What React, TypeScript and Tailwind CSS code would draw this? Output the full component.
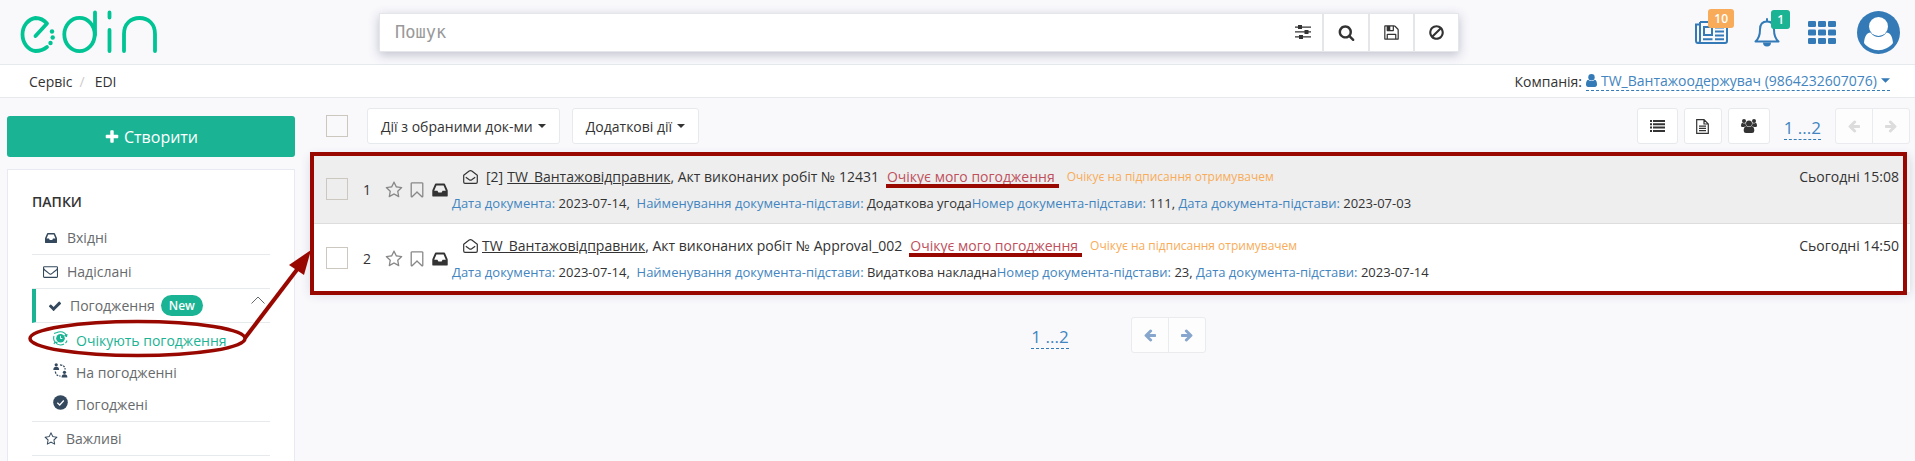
import React from "react";

type IconProps = { className?: string };

function Glyph({ d, className }: { d: string; className?: string }) {
  return (
    <svg viewBox="0 0 1792 1792" fill="currentColor" className={className} aria-hidden="true">
      <path d={d} />
    </svg>
  );
}

const INBOX =
  "M1151 960h316q-1-3-2.5-8t-2.5-8l-212-496h-708l-212 496q-1 2-2.5 8t-2.5 8h316l95 192h320zm513 30v482q0 26-19 45t-45 19h-1408q-26 0-45-19t-19-45v-482q0-62 25-123l238-552q10-25 36.5-42t52.5-17h832q26 0 52.5 17t36.5 42l238 552q25 61 25 123z";
const PLUS =
  "M1600 736v192q0 40-28 68t-68 28h-416v416q0 40-28 68t-68 28h-192q-40 0-68-28t-28-68v-416h-416q-40 0-68-28t-28-68v-192q0-40 28-68t68-28h416v-416q0-40 28-68t68-28h192q40 0 68 28t28 68v416h416q40 0 68 28t28 68z";
const CHECK =
  "M1671 566q0 40-28 68l-724 724-136 136q-28 28-68 28t-68-28l-136-136-362-362q-28-28-28-68t28-68l136-136q28-28 68-28t68 28l294 295 656-657q28-28 68-28t68 28l136 136q28 28 28 68z";
const STAR =
  "M1201 1004l306-297-422-62-189-382-189 382-422 62 306 297-73 421 378-199 377 199zm527-357q0 22-26 48l-363 354 86 500q1 7 1 20 0 50-41 50-19 0-40-12l-449-236-449 236q-22 12-40 12-21 0-31.5-14.5t-10.5-35.5q0-6 2-20l86-500-364-354q-25-27-25-48 0-37 56-46l502-73 225-455q19-41 49-41t49 41l225 455 502 73q56 9 56 46z";
const BOOKMARK =
  "M1408 256h-1024v1242l423-406 89-85 89 85 423 406v-1242zm12-128q23 0 44 9 33 13 52.5 41t19.5 62v1289q0 34-19.5 62t-52.5 41q-19 8-44 8-48 0-83-32l-441-424-441 424q-36 33-83 33-23 0-44-9-33-13-52.5-41t-19.5-62v-1289q0-34 19.5-62t52.5-41q21-9 44-9h1048z";
const SEARCH =
  "M1216 832q0-185-131.5-316.5t-316.5-131.5-316.5 131.5-131.5 316.5 131.5 316.5 316.5 131.5 316.5-131.5 131.5-316.5zm512 832q0 52-38 90t-90 38q-54 0-90-38l-343-342q-179 124-399 124-143 0-273.5-55.5t-225-150-150-225-55.5-273.5 55.5-273.5 150-225 225-150 273.5-55.5 273.5 55.5 225 150 150 225 55.5 273.5q0 220-124 399l343 343q37 37 37 90z";
const BAN =
  "M1440 893q0-161-87-295l-754 753q137 89 297 89 111 0 211.5-43.5t173.5-116.5 116-174.5 43-212.5zm-999 299l755-754q-135-91-300-91-148 0-273 73t-198 199-73 274q0 162 89 299zm1223-299q0 157-61 300t-163.5 246-245 164-298.5 61-298.5-61-245-164-163.5-246-61-300 61-299.5 163.5-245.5 245-164 298.5-61 298.5 61 245 164 163.5 245.5 61 299.5z";
const ARROW_LEFT =
  "M1664 896v128q0 53-32.5 90.5t-84.5 37.5h-704l293 294q38 36 38 90t-38 90l-75 76q-37 37-90 37-52 0-91-37l-651-652q-37-37-37-90 0-52 37-91l651-650q38-38 91-38 52 0 90 38l75 74q38 38 38 91t-38 91l-293 293h704q52 0 84.5 37.5t32.5 90.5z";
const FLOPPY =
  "M512 1536h768v-384h-768v384zm896 0h128v-896q0-14-10-38.5t-20-34.5l-281-281q-10-10-34-20t-39-10v416q0 40-28 68t-68 28h-576q-40 0-68-28t-28-68v-416h-128v1280h128v-416q0-40 28-68t68-28h832q40 0 68 28t28 68v416zm-384-928v-320q0-13-9.5-22.5t-22.5-9.5h-192q-13 0-22.5 9.5t-9.5 22.5v320q0 13 9.5 22.5t22.5 9.5h192q13 0 22.5-9.5t9.5-22.5zm640 32v928q0 40-28 68t-68 28h-1344q-40 0-68-28t-28-68v-1344q0-40 28-68t68-28h928q40 0 88 20t76 48l280 280q28 28 48 76t20 88z";
const ENVELOPE =
  "M1664 1504v-768q-32 36-69 66-268 206-426 338-51 43-83 67t-86.5 48.5-102.5 24.5h-2q-48 0-102.5-24.5t-86.5-48.5-83-67q-158-132-426-338-37-30-69-66v768q0 13 9.5 22.5t22.5 9.5h1472q13 0 22.5-9.5t9.5-22.5zm0-1051v-24.5l-.5-13-3-12.5-5.5-9-9-7.5-14-2.5h-1472q-13 0-22.5 9.5t-9.5 22.5q0 168 147 284 193 152 401 317 6 5 35 29.5t46 37.5 44.5 31.5 50.5 27.5 43 9h2q20 0 43-9t50.5-27.5 44.5-31.5 46-37.5 35-29.5q208-165 401-317 54-43 100.5-115.5t46.5-131.5zm128-37v1088q0 66-47 113t-113 47h-1472q-66 0-113-47t-47-113v-1088q0-66 47-113t113-47h1472q66 0 113 47t47 113z";

function Logo() {
  return (
    <svg viewBox="0 0 138 43" className="h-[43px] w-[138px]" fill="none" stroke="#00c494" strokeWidth="3.8" strokeLinecap="round" role="img" aria-label="edin">
      <path d="M16.5 26 L28 13.5 C24.5 9.5 20.5 8 16.5 8 A14.6 16.6 0 0 0 16.5 41 C20.5 41 25 39.5 28 37" strokeLinejoin="round" />
      <ellipse cx="60.5" cy="24.5" rx="15.2" ry="16.6" />
      <path d="M76 2.5 V25" />
      <path d="M90.5 2.5 V7.5 M90.5 20 V41" />
      <path d="M105 41 V24 C105 14 111.500 8 120.500 8 C129.500 8 136 14 136 24 V41" />
      <g fill="#00c494" stroke="none">
        <circle cx="33" cy="21.500" r="2.200" />
        <circle cx="33.700" cy="27.500" r="2.200" />
        <circle cx="31.500" cy="33" r="2.200" />
      </g>
    </svg>
  );
}

function SlidersIcon({ className }: IconProps) {
  return (
    <svg viewBox="0 0 16 14" fill="currentColor" className={className} aria-hidden="true">
      <path d="M0 1.500h16v1.200H0zM3 0h4v4H3zM0 6.200h16v1.200H0zM9.500 5h4v4h-4zM0 11.200h16v1.200H0zM4 10h4v4H4z" />
    </svg>
  );
}

function NewsIcon({ className }: IconProps) {
  return (
    <svg viewBox="0 0 33 23" fill="none" stroke="currentColor" strokeWidth="2" className={className} aria-hidden="true">
      <path d="M5 1 H32 V20 Q32 22 30 22 H3 Q1 22 1 19.500 V3.500 H5 M5 1 V19.500 Q5 22 3 22" />
      <path d="M9 6 H17 V14 H9 Z M20 6.500 H29 M20 10.500 H29 M20 14.500 H29 M8 18.200 H17.500 M20 18.200 H29" />
    </svg>
  );
}

function BellIcon({ className }: IconProps) {
  return (
    <svg viewBox="0 0 26 29" className={className} fill="none" stroke="currentColor" strokeWidth="2" strokeLinejoin="round" aria-hidden="true">
      <path d="M1.500 23.500 C5 20.500 6 17 6 11.500 C6 6.500 8.500 3.500 13 3.500 C17.500 3.500 20 6.500 20 11.500 C20 17 21 20.500 24.500 23.500 Z" />
      <path d="M13 3 V1" strokeLinecap="round" />
      <path d="M9 24.500 H17 A4 4 0 0 1 9 24.500 Z" fill="currentColor" stroke="none" />
    </svg>
  );
}

function GridIcon({ className }: IconProps) {
  return (
    <svg viewBox="0 0 28 23" className={className} fill="currentColor" aria-hidden="true">
      {[0, 8.5, 17].map((y) => [0, 10, 20].map((x) => <rect key={`${x}-${y}`} x={x} y={y} width="8" height="6" rx="1.3" />))}
    </svg>
  );
}

function AvatarIcon({ className }: IconProps) {
  return (
    <svg viewBox="0 0 43 43" className={className} aria-hidden="true">
      <circle cx="21.500" cy="21.500" r="21.500" fill="#337ab7" />
      <path d="M7 32 C7.500 25.500 10 21.500 13.500 21.500 C18 27.500 25 27.500 29.500 21.500 C33 21.500 35.500 25.500 36 32 C29 41.500 14 41.500 7 32 Z" fill="#fff" />
      <circle cx="21.500" cy="15.500" r="9.500" fill="#fff" />
    </svg>
  );
}

function UserIcon({ className }: IconProps) {
  return (
    <svg viewBox="0 0 11 13" className={className} fill="currentColor" aria-hidden="true">
      <circle cx="5.500" cy="3.200" r="3.200" />
      <path d="M2.300 5.800 C3.800 7.400 7.200 7.400 8.700 5.800 C10.500 6.200 11 8.500 11 10.500 C11 12 10.200 13 8.800 13 H2.200 C0.800 13 0 12 0 10.500 C0 8.500 0.500 6.200 2.300 5.800 Z" />
    </svg>
  );
}

function ListIcon({ className }: IconProps) {
  return (
    <svg viewBox="0 0 15 12" className={className} fill="currentColor" aria-hidden="true">
      <path d="M0 0h2v2H0zM3 0h12v2H3zM0 3.300h2v2H0zM3 3.300h12v2H3zM0 6.600h2v2H0zM3 6.600h12v2H3zM0 9.900h2v2H0zM3 9.900h12v2H3z" />
    </svg>
  );
}

function FileIcon({ className }: IconProps) {
  return (
    <svg viewBox="0 0 13 15" className={className} fill="none" stroke="currentColor" strokeWidth="1.200" aria-hidden="true">
      <path d="M0.700 0.700 H8 L12.300 5 V14.300 H0.700 Z M8 0.700 V5 H12.300 M3 7.200 H10 M3 9.400 H10 M3 11.600 H10" />
    </svg>
  );
}

function UsersIcon({ className }: IconProps) {
  return (
    <svg viewBox="0 0 16 14" className={className} fill="currentColor" aria-hidden="true">
      <circle cx="3" cy="2" r="2" />
      <circle cx="13" cy="2" r="2" />
      <circle cx="8" cy="4.500" r="3" />
      <path d="M1.200 3.800 Q3 5 4.500 4 Q4.500 6 5.500 7 Q4 7 3.200 8 H1.200 Q0 8 0 6.500 Q0 4.500 1.200 3.800 Z M14.800 3.800 Q13 5 11.500 4 Q11.500 6 10.500 7 Q12 7 12.800 8 H14.800 Q16 8 16 6.500 Q16 4.500 14.800 3.800 Z" />
      <path d="M5.200 7 Q8 9 10.800 7 C12.700 7.500 13.300 9.500 13.300 11.700 Q13.300 14 11 14 H5 Q2.700 14 2.700 11.700 C2.700 9.500 3.300 7.500 5.200 7 Z" />
    </svg>
  );
}

function OpenEnvelopeIcon({ className }: IconProps) {
  return (
    <svg viewBox="0 0 15 14" className={className} fill="none" stroke="currentColor" strokeWidth="1.200" strokeLinejoin="round" aria-hidden="true">
      <path d="M0.700 5.200 L6.200 1.100 Q7.500 0.200 8.800 1.100 L14.300 5.200 V12 Q14.300 13.300 13 13.300 H2 Q0.700 13.300 0.700 12 Z" />
      <path d="M2.800 7.200 L6.300 9.800 Q7.500 10.600 8.700 9.800 L12.200 7.200" />
    </svg>
  );
}

function AwaitIcon({ className }: IconProps) {
  return (
    <svg viewBox="0 0 15 15" className={className} fill="none" stroke="currentColor" strokeWidth="1.100" aria-hidden="true">
      <circle cx="7.500" cy="7.300" r="4.300" fill="currentColor" stroke="none" />
      <path d="M7.500 4.800 V7.500 H9.300" stroke="#fff" strokeWidth="0.900" />
      <path d="M4 1.600 A6.600 6.600 0 0 1 13.500 5 M14 3 L13.600 5.500 L11.500 4.500 M1 5 A6.600 6.600 0 0 0 1.600 10.500 M11 13 A6.600 6.600 0 0 1 2.500 11.500 M1 13 L2 10.800 L4.500 11.500 M1 2.500 L4 1.500 M14 9.500 A6.600 6.600 0 0 1 12.500 12.200" />
    </svg>
  );
}

function ExchangeIcon({ className }: IconProps) {
  return (
    <svg viewBox="0 0 14 14" className={className} fill="currentColor" aria-hidden="true">
      <circle cx="3" cy="1.700" r="1.500" />
      <path d="M0.300 6.500 Q0.300 3.600 3 3.600 Q5.700 3.600 5.700 6.500 Z" />
      <circle cx="10.700" cy="8.700" r="1.500" />
      <path d="M8 13.500 Q8 10.600 10.700 10.600 Q13.400 10.600 13.400 13.500 Z" />
      <path d="M6.500 1.800 Q11 1.800 11.300 6 M2.200 8 Q2.500 12 7 12.200" fill="none" stroke="currentColor" strokeWidth="1.200" strokeDasharray="2 1" />
    </svg>
  );
}

function RoundCheckIcon({ className }: IconProps) {
  return (
    <svg viewBox="0 0 15 15" className={className} aria-hidden="true">
      <circle cx="7.500" cy="7.500" r="7.300" fill="currentColor" />
      <path d="M4.300 7.800 L6.700 10 L10.800 5.500" fill="none" stroke="#fff" strokeWidth="1.300" />
    </svg>
  );
}

function Caret({ className }: IconProps) {
  return (
    <svg viewBox="0 0 8 4" className={className} fill="currentColor" aria-hidden="true">
      <path d="M0 0h8L4 4z" />
    </svg>
  );
}

const box = "block size-[22px] shrink-0 appearance-none border border-[#ccc8c0] bg-transparent";
const toolButton = "flex h-[36px] items-center justify-center rounded-[3px] border border-[#e7eaec] bg-white text-[#333]";

function PageLink() {
  return (
    <a href="#pages" className="border-b border-dashed border-[#337ab7] text-[17px] leading-6 text-[#4285c0]">
      1 ...2
    </a>
  );
}

function Pager({ muted }: { muted: boolean }) {
  const tone = muted ? "text-[#dcdcdc]" : "text-[#87a6cd]";
  return (
    <div className={`flex h-[36px] rounded-[3px] border border-[#e9ebee] bg-[#fdfdfd] ${tone}`}>
      <button aria-label="Попередня" className="flex w-[37px] items-center justify-center border-r border-[#e9ebee]">
        <Glyph d={ARROW_LEFT} className="size-[14px]" />
      </button>
      <button aria-label="Наступна" className="flex w-[36px] items-center justify-center">
        <Glyph d={ARROW_LEFT} className="size-[14px] -scale-x-100" />
      </button>
    </div>
  );
}

type Doc = {
  id: number;
  prefix?: string;
  number: string;
  date: string;
  base: string;
  baseNumber: string;
  baseDate: string;
  time: string;
};

const docs: Doc[] = [
  { id: 1, prefix: "[2]", number: "12431", date: "2023-07-14", base: "Додаткова угода", baseNumber: "111", baseDate: "2023-07-03", time: "Сьогодні 15:08" },
  { id: 2, number: "Approval_002", date: "2023-07-14", base: "Видаткова накладна", baseNumber: "23", baseDate: "2023-07-14", time: "Сьогодні 14:50" },
];

function Label({ children }: { children: React.ReactNode }) {
  return <span className="text-[#4285c0]">{children}</span>;
}

function DocRow({ doc }: { doc: Doc }) {
  return (
    <tr className="h-[68px] border-b border-[#ddd] bg-white align-top odd:bg-[#eee] last:h-[69px] last:border-0">
      <td className="w-[52px] pt-[23px] pl-[15px]">
        <input type="checkbox" aria-label={`Обрати документ ${doc.id}`} className={box} />
      </td>
      <td className="w-[22px] pt-[25px] text-[14px] leading-5">{doc.id}</td>
      <td className="w-[67px] pt-[26px]">
        <div className="flex items-center gap-[5px] text-[#888]">
          <button aria-label="Важливий"><Glyph d={STAR} className="block size-[18px]" /></button>
          <button aria-label="Закладка"><Glyph d={BOOKMARK} className="block size-[18px]" /></button>
          <Glyph d={INBOX} className="block size-[18px] text-[#333]" />
        </div>
      </td>
      <td className="pt-[12px]">
        <div className="flex items-center pl-[11px] text-[14px] leading-5">
          <OpenEnvelopeIcon className="mr-1 h-[14px] w-[15px]" />
          {doc.prefix && <span className="mx-1">{doc.prefix}</span>}
          <a href="#document" className="underline">TW_Вантажовідправник</a>
          <span className="mr-2">, Акт виконаних робіт № {doc.number}</span>
          <span className="relative text-[#c0505c] after:absolute after:top-[17px] after:-right-1 after:-left-px after:h-1 after:bg-[#990800]">
            Очікує мого погодження
          </span>
          <span className="ml-3 text-[12px] text-[#f8ac59]">Очікує на підписання отримувачем</span>
        </div>
        <div className="mt-[6px] text-[13px] leading-5">
          <Label>Дата документа:</Label> {doc.date},&nbsp; <Label>Найменування документа-підстави:</Label> {doc.base}
          <Label>Номер документа-підстави:</Label> {doc.baseNumber}, <Label>Дата документа-підстави:</Label> {doc.baseDate}
        </div>
      </td>
      <td className="pt-[12px] pr-[11px] text-right text-[14px] leading-5 whitespace-nowrap">{doc.time}</td>
    </tr>
  );
}

export default function App() {
  const item = "flex h-[34px] items-center border-b border-[#e7eaec]";
  const sub = "flex h-8 items-center pl-[21px]";
  return (
    <div className="flex min-h-screen flex-col bg-[#f9f9fc] font-['Open_Sans',sans-serif] text-[14px] text-[#333]">
      <header className="grid h-[65px] grid-cols-[379px_minmax(0,1fr)_456px] items-center border-b border-[#e7eaec]">
        <a href="#home" className="ml-[19px] pb-px"><Logo /></a>
        <form className="flex h-[39px] border border-[#e5e6e9] bg-white shadow-[0_3px_10px_rgba(60,65,100,0.3)]">
          <input
            type="text"
            aria-label="Пошук"
            placeholder="Пошук"
            className="min-w-0 flex-1 bg-transparent px-[15px] pt-[2px] font-['DejaVu_Sans_Mono',monospace] text-[17px] outline-none placeholder:text-[#999]"
          />
          <button type="button" aria-label="Фільтри" className="flex w-[39px] items-center justify-center"><SlidersIcon className="h-[14px] w-4" /></button>
          <button type="button" aria-label="Шукати" className="flex w-[46px] items-center justify-center border-l-2 border-[#e5e6e9]"><Glyph d={SEARCH} className="size-[17px]" /></button>
          <button type="button" aria-label="Зберегти" className="flex w-[45px] items-center justify-center border-l-2 border-[#e5e6e9]"><Glyph d={FLOPPY} className="size-[17px]" /></button>
          <button type="button" aria-label="Очистити" className="flex w-[45px] items-center justify-center border-l-2 border-[#e5e6e9]"><Glyph d={BAN} className="size-[17px]" /></button>
        </form>
        <div className="flex items-center justify-end pr-[15px] text-[#337ab7]">
          <button aria-label="Новини" className="relative mr-[26px]">
            <NewsIcon className="block h-[23px] w-[33px]" />
            <span className="absolute -top-3 -right-[6px] rounded-[3px] bg-[#f8ac59] px-[6px] text-[12px] leading-[19px] font-semibold text-white">10</span>
          </button>
          <button aria-label="Сповіщення" className="relative mr-[28px]">
            <BellIcon className="block h-[29px] w-[26px]" />
            <span className="absolute -top-2 -right-[10px] rounded-[3px] bg-[#1ab394] px-[6px] text-[12px] leading-[19px] font-semibold text-white">1</span>
          </button>
          <button aria-label="Сервіси" className="mr-[21px]"><GridIcon className="block h-[23px] w-[28px]" /></button>
          <button aria-label="Профіль"><AvatarIcon className="block size-[43px]" /></button>
        </div>
      </header>

      <div className="flex h-[33px] items-center justify-between border-b border-[#e7eaec] bg-white pr-[25px] pl-[29px]">
        <nav className="flex">
          <a href="#service">Сервіс</a>
          <span className="mr-[10px] ml-[7px] text-[#ccc]">/</span>
          <a href="#edi">EDI</a>
        </nav>
        <div className="flex items-center">
          <span className="mr-1">Компанія:</span>
          <a href="#company" className="flex items-center gap-1 border-b border-dashed border-[#337ab7] leading-[19px] text-[#4285c0]">
            <UserIcon className="h-[13px] w-[11px] text-[#337ab7]" />
            TW_Вантажоодержувач (9864232607076)
            <Caret className="h-[5px] w-[9px] text-[#337ab7]" />
          </a>
        </div>
      </div>

      <div className="flex flex-1">
        <aside className="flex w-[295px] shrink-0 flex-col pt-[18px] pl-[7px]">
          <button className="flex h-[41px] items-center justify-center gap-1 rounded-[3px] bg-[#1ab394] text-[16px] text-white">
            <Glyph d={PLUS} className="size-4" />
            Створити
          </button>
          <div className="mt-3 flex-1 border border-[#e7eaf0] border-b-0 bg-white pr-6 pl-6 text-[#676a6c]">
            <h2 className="mt-[22px] mb-[9px] text-[14px] leading-5 font-semibold text-[#333]">ПАПКИ</h2>
            <a href="#inbox" className={`${item} pl-3`}>
              <Glyph d={INBOX} className="mr-[9px] size-[14px] text-[#34495e]" />
              Вхідні
            </a>
            <a href="#sent" className={`${item} pl-[11px]`}>
              <Glyph d={ENVELOPE} className="mr-[9px] size-[15px] text-[#34495e]" />
              Надіслані
            </a>
            <a href="#approval" className={`${item} border-l-4 border-l-[#1ab394] pl-3`}>
              <Glyph d={CHECK} className="mr-2 size-[14px] text-[#34495e]" />
              Погодження
              <span className="ml-[6px] rounded-full bg-[#1ab394] px-2 text-[12px] leading-[21px] font-semibold text-white">New</span>
              <svg viewBox="0 0 14 8" className="mr-[5px] mb-3 ml-auto h-2 w-[14px]" fill="none" stroke="#676a6c" aria-hidden="true">
                <path d="M0.500 7.500 L7 1 L13.500 7.500" />
              </svg>
            </a>
            <div className="relative border-b border-[#e7eaec] py-px">
              <a href="#awaiting" className={`${sub} text-[#1ab394]`}>
                <AwaitIcon className="mr-2 mb-1 size-[15px]" />
                Очікують погодження
              </a>
              <a href="#in-progress" className={`${sub}`}>
                <ExchangeIcon className="mr-2 mb-1 size-[15px] text-[#34495e]" />
                На погодженні
              </a>
              <a href="#approved" className={`${sub}`}>
                <RoundCheckIcon className="mr-2 mb-1 size-[15px] text-[#34495e]" />
                Погоджені
              </a>
              <svg viewBox="0 0 284 120" className="pointer-events-none absolute -top-[83px] -left-1 z-10 h-[120px] w-[284px]" fill="none" stroke="#990800" strokeWidth="3.500" aria-hidden="true">
                <ellipse cx="109.500" cy="98.500" rx="107.500" ry="17" />
                <path d="M217 98 L271 27" strokeWidth="4" />
                <path d="M283 10 L276 35 L261 25 Z" fill="#990800" stroke="none" />
              </svg>
            </div>
            <a href="#important" className={`${item} pl-3`}>
              <Glyph d={STAR} className="mr-2 size-[14px] text-[#34495e]" />
              Важливі
            </a>
          </div>
        </aside>

        <main className="min-w-0 flex-1 pt-[10px] pr-[5px] pl-4">
          <div className="flex items-center pl-[15px]">
            <input type="checkbox" aria-label="Обрати всі" className={box} />
            <button className={`${toolButton} ml-[19px] gap-[5px] px-[13px]`}>
              Дії з обраними док-ми
              <Caret className="h-1 w-2" />
            </button>
            <button className={`${toolButton} ml-3 gap-[5px] px-[13px]`}>
              Додаткові дії
              <Caret className="h-1 w-2" />
            </button>
            <div className="ml-auto flex items-center gap-[6px]">
              <button aria-label="Список" className={`${toolButton} w-[41px]`}><ListIcon className="h-3 w-[15px]" /></button>
              <button aria-label="Документ" className={`${toolButton} w-[38px]`}><FileIcon className="h-[15px] w-[13px]" /></button>
              <button aria-label="Групи" className={`${toolButton} w-[42px]`}><UsersIcon className="h-[14px] w-4" /></button>
            </div>
            <div className="mx-[14px] pt-[3px]"><PageLink /></div>
            <Pager muted />
          </div>

          <div className="relative mt-[11px] shadow-[0_2px_10px_rgba(60,65,100,0.2)]">
            <table className="w-full border-collapse">
              <tbody>
                {docs.map((doc) => (
                  <DocRow key={doc.id} doc={doc} />
                ))}
              </tbody>
            </table>
            <div className="pointer-events-none absolute -top-[3px] right-[3px] -bottom-[3px] -left-px border-4 border-[#990800]" />
          </div>

          <div className="mt-[25px] flex items-center justify-center gap-[62px] pl-4">
            <div className="pt-[3px]"><PageLink /></div>
            <Pager muted={false} />
          </div>
        </main>
      </div>
    </div>
  );
}
